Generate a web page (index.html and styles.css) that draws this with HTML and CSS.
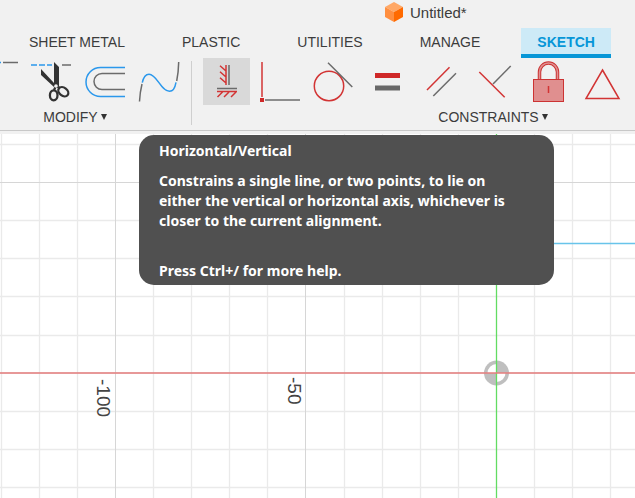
FILE: index.html
```html
<!DOCTYPE html>
<html lang="en">
<head>
    <meta charset="UTF-8">
    <meta name="viewport" content="width=device-width, initial-scale=1.0">
    <title>Untitled*</title>
    <link rel="stylesheet" href="styles.css">
</head>
<body>
    <header>
        <div class="document">
            <svg class="cube" viewBox="0 0 18 20">
                <path d="M9 0 18 5 9 10 0 5z" fill="#ffa866"/>
                <path d="M0 5 9 10V20L0 15z" fill="#ff8f40"/>
                <path d="M18 5 9 10V20L18 15z" fill="#ff6a00"/>
            </svg>
            <span>Untitled*</span>
        </div>
        <nav class="tabs">
            <a href="#">SHEET METAL</a>
            <a href="#">PLASTIC</a>
            <a href="#">UTILITIES</a>
            <a href="#">MANAGE</a>
            <a href="#" class="active">SKETCH</a>
        </nav>
        <div class="toolbar">
            <div class="group modify">
                <div class="tools">
                    <button aria-label="Fillet">
                        <svg viewBox="0 0 47 47"><path class="blue" d="M20 4.5H27"/><path class="gray" d="M29 4.5H44"/></svg>
                    </button>
                    <button aria-label="Trim">
                        <svg viewBox="0 0 47 47">
                            <path class="blue" d="M3 7H9M11 7H17M19 7H24"/>
                            <path class="gray" d="M34 7H43"/>
                            <path d="M13 11 26 25V29L13 17zM26 4 31 9V28H26z" fill="#333"/>
                            <g fill="none" stroke="#333" stroke-width="2.300">
                                <ellipse cx="25.700" cy="37.300" rx="3.800" ry="5"/>
                                <ellipse cx="35.300" cy="33.700" rx="5.500" ry="4" transform="rotate(38 35.300 33.700)"/>
                                <path d="M26 32 28 28 32 30"/>
                            </g>
                            <circle cx="28" cy="28" r="1.800" fill="#f1f1f1"/>
                        </svg>
                    </button>
                    <button aria-label="Offset">
                        <svg viewBox="0 0 47 47">
                            <path class="blue" d="M43 9.500H18.500a14.500 14.500 0 0 0 0 29H43"/>
                            <path class="gray" d="M43 15.500H20a8 8 0 0 0 0 16H43"/>
                        </svg>
                    </button>
                    <button aria-label="Blend curve">
                        <svg viewBox="0 0 47 47">
                            <path class="gray" d="M3.500 43.500Q4 34 6 26M40.700 23Q42.500 14 42.700 4"/>
                            <path class="blue" d="M6.300 24.700C7.500 19 9.500 16.300 13 16.300C21 16.300 25 33.300 33.500 33.300C37 33.300 39 30 40 24.300"/>
                        </svg>
                    </button>
                </div>
                <button class="menu">MODIFY <span class="caret"></span></button>
            </div>
            <div class="separator"></div>
            <div class="group constraints">
                <div class="tools">
                    <button class="hovered" aria-label="Horizontal/Vertical">
                        <svg viewBox="0 0 47 47">
                            <path d="M26 7V27" stroke="#858585" stroke-width="2"/>
                            <path class="gray" d="M14 30.500H34"/>
                            <path class="red" d="M23 7V27M17 7.700 23 13M17 13.700 23 19M17 19.700 23 25M14 33.500H34M19.500 34 14.500 39M26 34 21 39M33 34 28 39"/>
                        </svg>
                    </button>
                    <button aria-label="Coincident">
                        <svg viewBox="0 0 47 47">
                            <path class="red" d="M5 4V39"/><path class="gray" d="M8 42H43"/>
                            <rect x="3" y="40" width="4" height="4" fill="#cf2828"/>
                        </svg>
                    </button>
                    <button aria-label="Tangent">
                        <svg viewBox="0 0 47 47">
                            <circle class="red" cx="18" cy="28" r="14.700"/><path class="gray" d="M17 4.700 41.300 29"/>
                        </svg>
                    </button>
                    <button aria-label="Equal">
                        <svg viewBox="0 0 47 47">
                            <rect x="10" y="15" width="25" height="5" fill="#cf2828"/>
                            <rect x="10" y="27.500" width="25" height="5" fill="#686868"/>
                        </svg>
                    </button>
                    <button aria-label="Parallel">
                        <svg viewBox="0 0 47 47">
                            <path class="red" d="M8 32 30.500 9.300"/><path class="gray" d="M14.300 38 37 15.300"/>
                        </svg>
                    </button>
                    <button aria-label="Perpendicular">
                        <svg viewBox="0 0 47 47">
                            <path class="red" d="M6.300 14 31.700 39.300"/><path class="gray" d="M20 26 37.700 8"/>
                        </svg>
                    </button>
                    <button aria-label="Fix/Unfix">
                        <svg viewBox="0 0 47 47">
                            <path d="M12.500 21V14a9 9 0 0 1 18 0V21" fill="none" stroke="#cc3333" stroke-width="3.500"/>
                            <path d="M12.500 21V14a9 9 0 0 1 18 0V21" fill="none" stroke="#e09090" stroke-width="1.500"/>
                            <rect x="6.500" y="21.500" width="30" height="22" fill="#e08f8f" stroke="#cc3333"/>
                            <path class="red" d="M21.500 28V35"/>
                        </svg>
                    </button>
                    <button aria-label="Midpoint">
                        <svg viewBox="0 0 47 47"><path class="red" d="M21.500 12 38 40.500H5z"/></svg>
                    </button>
                </div>
                <button class="menu">CONSTRAINTS <span class="caret"></span></button>
            </div>
        </div>
    </header>

    <main>
        <svg class="canvas">
            <defs>
                <pattern id="grid" x="115" y="48" width="381" height="381" patternUnits="userSpaceOnUse">
                    <g fill="none" stroke="#eaeaea" stroke-width="1.300">
                        <path d="M38.500 0V381M76.500 0V381M114.500 0V381M152.500 0V381M229.500 0V381M267.500 0V381M305.500 0V381M343.500 0V381"/>
                        <path d="M0 38.500H381M0 76.500H381M0 114.500H381M0 153.500H381M0 229.500H381M0 267.500H381M0 305.500H381M0 343.500H381"/>
                    </g>
                    <path d="M.5 0V381M190.500 0V381M0 .5H381M0 191H381" fill="none" stroke="#d6d6d6"/>
                </pattern>
            </defs>
            <rect width="100%" height="100%" fill="url(#grid)"/>

            <!-- origin marker -->
            <g transform="translate(496.500 239)">
                <circle r="12.500" fill="#bfbfbf"/>
                <path d="M0 0H-9A9 9 0 0 1 0-9zM0 0H9A9 9 0 0 1 0 9z" fill="#fff"/>
            </g>

            <!-- axes and sketch line -->
            <path d="M496.500 0V2000" stroke="#62dc62" stroke-width="1.300"/>
            <path d="M0 239H4000" stroke="#e67c7c" stroke-width="1.700"/>
            <path d="M496 109.500H4000" stroke="#68c4ea" stroke-width="1.700"/>

            <text class="scale" transform="translate(97 245) rotate(90)">-100</text>
            <text class="scale" transform="translate(288 243) rotate(90)">-50</text>
        </svg>

        <div class="tooltip" role="tooltip">
            <h2>Horizontal/Vertical</h2>
            <p>Constrains a single line, or two points, to lie on either the vertical or horizontal axis, whichever is closer to the current alignment.</p>
            <p class="help">Press Ctrl+/ for more help.</p>
        </div>
    </main>
</body>
</html>
```
FILE: styles.css
```css
body {
    margin: 0;
    min-height: 100vh;
    display: flex;
    flex-direction: column;
    background: #f1f1f1;
    color: #3c3c3c;
    font-family: "Liberation Sans", Arial, sans-serif;
    font-size: 14px;
    overflow: hidden;
}

header {
    border-bottom: 1px solid #c8c8c8;
    margin-bottom: 3px;
}

/* Document name */
.document {
    display: flex;
    align-items: center;
    gap: 7px;
    height: 24px;
    padding: 0 0 4px 385px;
    font-size: 15px;
}

.cube {
    width: 18px;
    height: 20px;
}

/* Workspace tabs */
.tabs {
    display: flex;
    gap: 25px;
    padding-left: 13px;
}

.tabs a {
    padding: 2px 16px 0;
    line-height: 24px;
    border-bottom: 4px solid transparent;
    color: inherit;
    text-decoration: none;
    white-space: nowrap;
}

.tabs .active {
    background: #cdeaf7;
    border-color: #0696d7;
    color: #0696d7;
    font-weight: bold;
}

/* Toolbar */
.toolbar {
    display: flex;
    padding-bottom: 3px;
    overflow: hidden;
}

.group {
    flex: none;
    display: flex;
    flex-direction: column;
    align-items: center;
    gap: 2px;
}

.modify {
    width: 216px;
    margin-left: -33px;
}

.constraints {
    width: 580px;
}

.tools {
    display: flex;
    gap: 7px;
    width: 100%;
}

.modify .tools {
    justify-content: flex-end;
}

.separator {
    flex: none;
    width: 1px;
    margin: 3px 11px 2px 8px;
    background: #cfcfcf;
}

button {
    padding: 0;
    border: none;
    background: none;
    color: inherit;
    font: inherit;
    cursor: pointer;
}

.tools button {
    flex: none;
    width: 47px;
    height: 47px;
}

.tools svg {
    display: block;
}

.hovered {
    background: #d9d9d9;
}

.menu {
    display: flex;
    align-items: center;
    gap: 3px;
    line-height: 20px;
}

.caret {
    border: 3px solid transparent;
    border-top: 6px solid #333;
    border-bottom: none;
}

.red,
.gray,
.blue {
    fill: none;
    stroke-width: 1.5;
}

.red {
    stroke: #d23434;
}

.gray {
    stroke: #6b6b6b;
}

.blue {
    stroke: #2b98ec;
}

/* Sketch canvas */
main {
    position: relative;
    flex: 1;
    display: flex;
    background: #fff;
}

.canvas {
    flex: 1;
    height: auto;
}

.scale {
    font-size: 19px;
    fill: #444;
}

.tooltip {
    position: absolute;
    top: 1px;
    left: 139px;
    box-sizing: border-box;
    width: 415px;
    padding: 6px 40px 4px 20px;
    border-radius: 15px;
    background: #505050;
    color: #fff;
    font-family: "Noto Sans", "Open Sans", sans-serif;
    font-size: 14px;
    font-weight: bold;
    line-height: 20px;
}

.tooltip h2 {
    margin: 0 0 10px;
    font: inherit;
}

.tooltip p {
    margin: 0;
}

.tooltip .help {
    margin-top: 30px;
}
```
